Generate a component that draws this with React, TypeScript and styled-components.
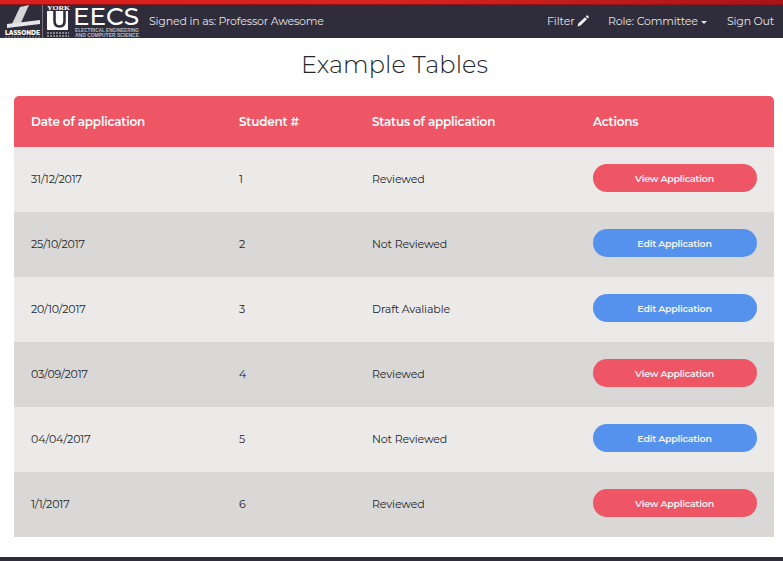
import React from "react";
import styled, { createGlobalStyle } from "styled-components";

const GlobalStyle = createGlobalStyle`
  * { box-sizing: border-box; }
  body {
    margin: 0;
    background: #fff;
    color: #24262b;
    font-family: Montserrat, Inter, "Liberation Sans", sans-serif;
    overflow: hidden;
  }
`;

const Page = styled.div`
  display: flex;
  flex-direction: column;
  height: 561px;
`;

const TopStripe = styled.div`
  flex: none;
  height: 5px;
  background: linear-gradient(to right, #d8201f 0%, #d8231f 50%, #a81318 100%);
  border-bottom: 1px solid #8d1418;
`;

const NavBar = styled.nav`
  flex: none;
  display: flex;
  align-items: center;
  height: 33px;
  padding: 0 9px 0 4px;
  background: #2f2d3c;
  color: #e2e2e4;
  font-size: 11px;
`;

const NavText = styled.span<{ $track: number }>`
  line-height: 30px;
  padding-bottom: 2px;
  white-space: nowrap;
  letter-spacing: ${(p) => p.$track}px;
`;

const NavLinks = styled.div`
  display: flex;
  align-items: center;
  margin-left: auto;
`;

const NavLink = styled.a<{ $width: number }>`
  display: flex;
  align-items: center;
  width: ${(p) => p.$width}px;
`;

const Caret = styled.i`
  margin: 2px 0 0 3px;
  border: 3px solid transparent;
  border-top-color: #e2e2e4;
  border-bottom: 0;
`;

const LogoSvg = styled.svg`
  flex: none;
  margin-right: 9px;
`;

const PencilSvg = styled.svg`
  margin: 0 0 2px 2px;
`;

const Title = styled.h1`
  flex: none;
  margin: 0;
  height: 58px;
  padding-left: 6px;
  line-height: 54px;
  text-align: center;
  font-size: 24px;
  font-weight: 300;
  letter-spacing: 0.13px;
`;

const Table = styled.div`
  flex: none;
  margin: 0 9px 20px 14px;
  border-radius: 5px 5px 0 0;
  overflow: hidden;
`;

const Row = styled.div`
  display: grid;
  grid-template-columns: 208px 133px 221px 198px;
  align-items: center;
  height: 65px;
  background: #ebeae8;
  &:nth-child(odd) { background: #d9d8d6; }
`;

const HeadRow = styled(Row)`
  height: 51px;
  && { background: #ee5565; }
  color: #fff;
`;

const HeadCell = styled.div`
  padding-left: 17px;
  font-size: 12px;
  font-weight: 600;
  white-space: nowrap;
  letter-spacing: -0.2px;
`;

const Cell = styled.div`
  padding: 0 17px 2px;
  font-size: 11px;
  white-space: nowrap;
  letter-spacing: -0.13px;
`;

const ActionButton = styled.button<{ $view: boolean }>`
  display: block;
  width: 164px;
  height: 28px;
  margin: 0 0 1px;
  padding: 0 1px 0 0;
  border: 0;
  border-radius: 14px;
  background: ${(p) => (p.$view ? "#ee5565" : "#5592ee")};
  color: #f4f1f1;
  font: 600 9.5px Montserrat, Inter, sans-serif;
  letter-spacing: -0.27px;
`;

const Footer = styled.footer`
  flex: 1;
  background: #2f2d3c;
`;

const Logo = () => (
  <LogoSvg width="136" height="33" viewBox="4 5 136 33" fill="#fff">
    <path d="M20 7l9-2-9 20-9 1z" fill="#d5d5d8" />
    <path d="M7 24l33-4v4L7 28z" fill="#e5e5e7" />
    <text x="5" y="35.4" fontSize="7" fontWeight="800" textLength="35" lengthAdjust="spacingAndGlyphs">LASSONDE</text>
    <path d="M5 37h35" stroke="#85838e" strokeDasharray="2 1" />
    <path d="M42.5 5v33" stroke="#77757f" />
    <text x="47" y="10" fontSize="7" fontFamily="Liberation Serif" fontWeight="700" textLength="23" lengthAdjust="spacingAndGlyphs">YORK</text>
    <path d="M47 11h21v19H47z" />
    <path d="M54.500 11v10q0 5.500 5 5.500t5-5.500V11" fill="none" stroke="#2f2d3c" strokeWidth="2.600" />
    <path d="M47 33h22M47 36h22" stroke="#85838e" strokeWidth="2" strokeDasharray="2 1" />
    <text x="73" y="24.500" fontSize="23.500" fontWeight="500" textLength="66" lengthAdjust="spacingAndGlyphs">EECS</text>
    <text x="75" y="31.700" fontSize="5" fontFamily="Liberation Sans" fontWeight="700" fill="#bcbbc0" textLength="64" lengthAdjust="spacingAndGlyphs">ELECTRICAL ENGINEERING</text>
    <text x="75" y="37" fontSize="5" fontFamily="Liberation Sans" fontWeight="700" fill="#bcbbc0" textLength="64" lengthAdjust="spacingAndGlyphs">AND COMPUTER SCIENCE</text>
  </LogoSvg>
);

const Pencil = () => (
  <PencilSvg width="13" height="12" viewBox="0 0 13 12" fill="#eee">
    <path d="M.5 11.500l.8-3L8 2.200l2 2-6.500 6.300zM8.700 1.500L9.700.6q.5-.5 1 0l1 1q.4.500 0 1L10.700 3.500z" />
  </PencilSvg>
);

const rows = [
  { date: "31/12/2017", status: "Reviewed", view: true },
  { date: "25/10/2017", status: "Not Reviewed", view: false },
  { date: "20/10/2017", status: "Draft Avaliable", view: false },
  { date: "03/09/2017", status: "Reviewed", view: true },
  { date: "04/04/2017", status: "Not Reviewed", view: false },
  { date: "1/1/2017", status: "Reviewed", view: true },
];

export default function App() {
  return (
    <>
      <GlobalStyle />
      <Page>
        <TopStripe />
        <NavBar>
          <Logo />
          <NavText $track={-0.18}>Signed in as: Professor Awesome</NavText>
          <NavLinks>
            <NavLink $width={61}><NavText $track={-0.1}>Filter</NavText><Pencil /></NavLink>
            <NavLink $width={119}><NavText $track={-0.16}>Role: Committee</NavText><Caret /></NavLink>
            <NavLink $width={47}><NavText $track={-0.2}>Sign Out</NavText></NavLink>
          </NavLinks>
        </NavBar>
        <Title>Example Tables</Title>
        <Table>
          <HeadRow>
            <HeadCell>Date of application</HeadCell>
            <HeadCell>Student #</HeadCell>
            <HeadCell>Status of application</HeadCell>
            <HeadCell>Actions</HeadCell>
          </HeadRow>
          {rows.map((row, i) => (
            <Row key={row.date}>
              <Cell>{row.date}</Cell>
              <Cell>{i + 1}</Cell>
              <Cell>{row.status}</Cell>
              <Cell>
                <ActionButton $view={row.view}>{row.view ? "View" : "Edit"} Application</ActionButton>
              </Cell>
            </Row>
          ))}
        </Table>
        <Footer />
      </Page>
    </>
  );
}
